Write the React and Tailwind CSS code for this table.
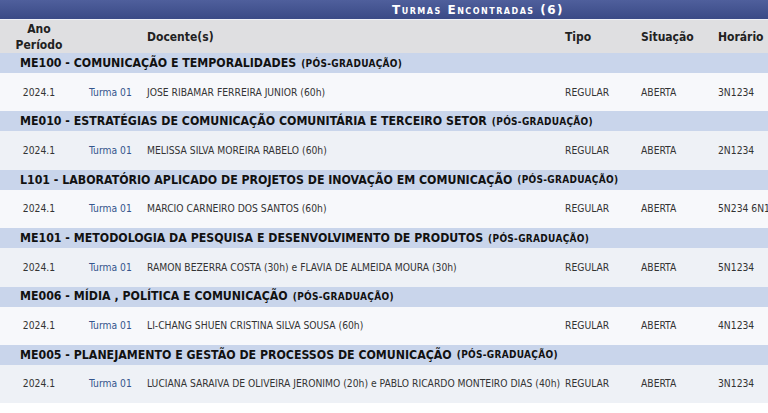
import React from "react";

const rows = [
  { code: "ME100 - COMUNICAÇÃO E TEMPORALIDADES", doc: "JOSE RIBAMAR FERREIRA JUNIOR (60h)", hor: "3N1234" },
  { code: "ME010 - ESTRATÉGIAS DE COMUNICAÇÃO COMUNITÁRIA E TERCEIRO SETOR", doc: "MELISSA SILVA MOREIRA RABELO (60h)", hor: "2N1234" },
  { code: "L101 - LABORATÓRIO APLICADO DE PROJETOS DE INOVAÇÃO EM COMUNICAÇÃO", doc: "MARCIO CARNEIRO DOS SANTOS (60h)", hor: "5N234 6N1234" },
  { code: "ME101 - METODOLOGIA DA PESQUISA E DESENVOLVIMENTO DE PRODUTOS", doc: "RAMON BEZERRA COSTA (30h) e FLAVIA DE ALMEIDA MOURA (30h)", hor: "5N1234" },
  { code: "ME006 - MÍDIA , POLÍTICA E COMUNICAÇÃO", doc: "LI-CHANG SHUEN CRISTINA SILVA SOUSA (60h)", hor: "4N1234" },
  { code: "ME005 - PLANEJAMENTO E GESTÃO DE PROCESSOS DE COMUNICAÇÃO", doc: "LUCIANA SARAIVA DE OLIVEIRA JERONIMO (20h) e PABLO RICARDO MONTEIRO DIAS (40h)", hor: "3N1234" },
];

const grid = "grid grid-cols-[78px_69px_418px_76px_77px_1fr]";

export default function App() {
  return (
    <div className="w-[768px] h-[413px] overflow-hidden bg-white" style={{ fontFamily: '"DejaVu Sans Condensed", "DejaVu Sans", sans-serif' }}>
      <div className="w-[960px]">
        <div className="h-[19px] bg-gradient-to-b from-[#4f5f9c] to-[#3a4a86] flex items-center pl-[392px]">
          <span className="text-white font-bold text-[12px] tracking-[1.5px] [font-variant:small-caps] leading-none [font-family:'DejaVu_Sans',sans-serif]">Turmas Encontradas (6)</span>
        </div>
        <div className={`${grid} h-[34px] bg-[#dfdfe1] border-t border-[#eef0f6] items-center text-[12px] font-bold text-[#222] leading-[16px]`}>
          <div className="text-center">Ano<br />Período</div>
          <div></div>
          <div>Docente(s)</div>
          <div>Tipo</div>
          <div>Situação</div>
          <div>Horário</div>
        </div>
        {rows.map((r, i) => (
          <div key={i}>
            <div className="h-[20px] bg-[#c9d5eb] flex items-center pl-[20px] whitespace-nowrap text-[#111]">
              <span className="font-bold text-[12.25px]">{r.code}</span>
              <span className="font-bold text-[10px] ml-[5px] tracking-[0.3px]">(PÓS-GRADUAÇÃO)</span>
            </div>
            <div className={`${grid} h-[38.4px] items-center text-[10.25px] text-[#333] whitespace-nowrap ${i % 2 === 0 ? "bg-[#f7f8fb]" : "bg-[#eef1f6]"}`}>
              <div className="text-center">2024.1</div>
              <div className="pl-[11px] text-[#34558c]">Turma 01</div>
              <div>{r.doc}</div>
              <div>REGULAR</div>
              <div>ABERTA</div>
              <div>{r.hor}</div>
            </div>
          </div>
        ))}
      </div>
    </div>
  );
}
